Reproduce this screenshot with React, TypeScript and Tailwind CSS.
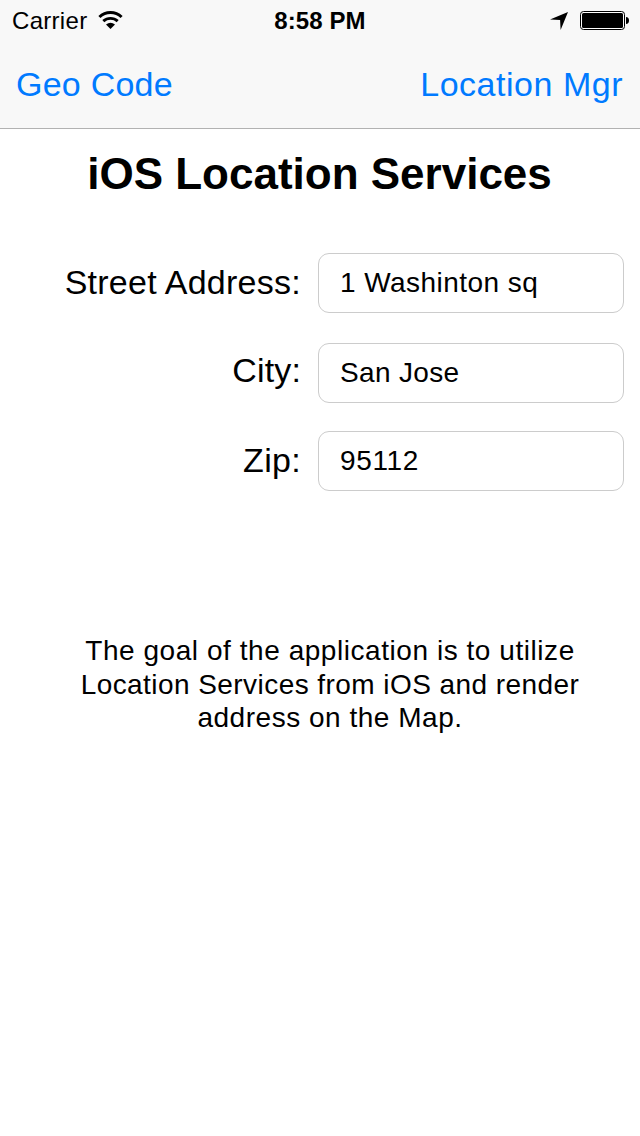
import React from "react";

type FieldProps = {
  id: string;
  label: string;
  value: string;
  labelClass: string;
  valueClass: string;
};

function Field({ id, label, value, labelClass, valueClass }: FieldProps) {
  return (
    <div className="flex h-[60px] items-start">
      <label
        htmlFor={id}
        className={`w-[301px] text-right text-[34px] whitespace-nowrap ${labelClass}`}
      >
        {label}
      </label>
      <output
        id={id}
        className={`ml-[17px] block h-[60px] w-[306px] rounded-[11px] border border-[#cccccc] bg-white pl-[21px] text-[28px] leading-[58px] ${valueClass}`}
      >
        {value}
      </output>
    </div>
  );
}

function WifiIcon() {
  return (
    <svg className="ml-[11px]" width="25" height="19" viewBox="0 0 25 19" fill="none" stroke="black">
      <path d="M1.4 6C7.6 .1 17.4 .1 23.6 6" strokeWidth="3" />
      <path d="M5.3 10.2C9.5 6.4 15.5 6.4 19.7 10.2" strokeWidth="2.9" />
      <path d="M8 13.6Q12.5 10 17 13.6L12.5 18Z" fill="black" stroke="none" />
    </svg>
  );
}

function LocationIcon() {
  return (
    <svg width="19" height="19" viewBox="0 0 19 19">
      <path d="M18 1L10.6 19L10.1 9L0 8.4Z" fill="black" />
    </svg>
  );
}

function BatteryIcon() {
  return (
    <svg width="49" height="19" viewBox="0 0 49 19">
      <rect x=".5" y=".5" width="44" height="18" rx="3" fill="white" stroke="black" />
      <rect x="2" y="2" width="41" height="15" rx="1.5" fill="black" />
      <path d="M46 6C48 6 49 7.5 49 9.5S48 13 46 13Z" fill="black" />
    </svg>
  );
}

export default function App() {
  return (
    <main className="h-[1136px] w-[640px] overflow-hidden bg-white font-['Liberation_Sans',sans-serif] text-black">
      <header className="h-[129px] border-b border-[#b2b2b2] bg-[#f8f8f8]">
        <div className="grid h-10 grid-cols-[262px_116px_262px] items-center">
          <div className="flex items-center pt-px pl-3">
            <span className="text-[24px] leading-[39px] tracking-[0.3px]">Carrier</span>
            <WifiIcon />
          </div>
          <span className="pt-0.5 text-center text-[24px] leading-[38px] font-bold tracking-[0.1px]">8:58 PM</span>
          <div className="flex items-center justify-end gap-[11px] pt-px pr-[11px]">
            <LocationIcon />
            <BatteryIcon />
          </div>
        </div>
        <nav className="flex h-[88px] items-center justify-between pr-[17px] pl-4 text-[34px] text-[#007aff]">
          <span className="tracking-[0.23px]">Geo Code</span>
          <span className="tracking-[0.52px]">Location Mgr</span>
        </nav>
      </header>
      <h1 className="mt-5 pr-px text-center text-[44px] leading-[50px] font-bold">iOS Location Services</h1>
      <section className="mt-[54px]">
        <Field
          id="street"
          label="Street Address:"
          value="1 Washinton sq"
          labelClass="leading-[58px] tracking-[0.26px]"
          valueClass="tracking-[0.45px]"
        />
        <div className="mt-[30px]">
          <Field
            id="city"
            label="City:"
            value="San Jose"
            labelClass="leading-[54px] tracking-[0.15px]"
            valueClass="tracking-[0.35px]"
          />
        </div>
        <div className="mt-7">
          <Field
            id="zip"
            label="Zip:"
            value="95112"
            labelClass="leading-[58px] tracking-[0.3px]"
            valueClass="tracking-[0.65px]"
          />
        </div>
      </section>
      <p className="mt-[143px] ml-5 text-center text-[28px] leading-[33.5px]">
        <span className="tracking-[0.55px]">The goal of the application is to utilize</span>
        <br />
        <span className="tracking-[0.44px]">Location Services from iOS and render</span>
        <br />
        <span className="tracking-[0.52px]">address on the Map.</span>
      </p>
    </main>
  );
}
